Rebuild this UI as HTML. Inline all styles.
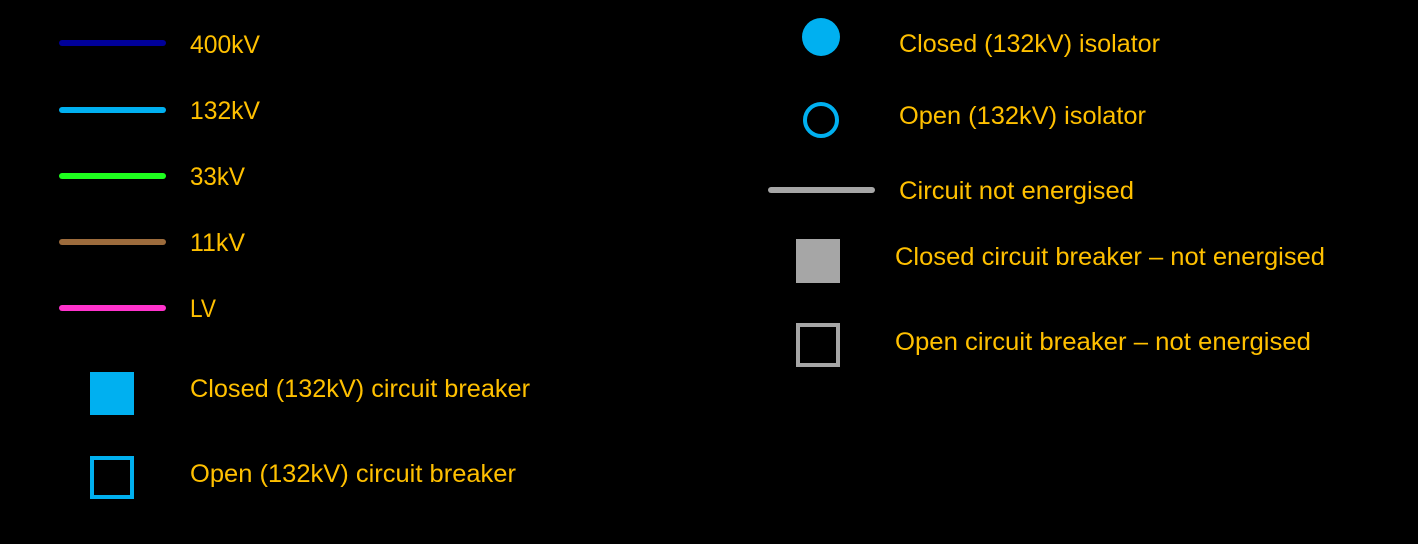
<!DOCTYPE html>
<html><head><style>html,body{margin:0;background:#000;overflow:hidden}</style></head>
<body>
<svg width="1418" height="544" xmlns="http://www.w3.org/2000/svg" style="display:block">
<rect width="1418" height="544" fill="#000"/>
<g stroke-linecap="round" stroke-width="6">
<line x1="62" y1="43" x2="163" y2="43" stroke="#000099"/>
<line x1="62" y1="110" x2="163" y2="110" stroke="#00B0F0"/>
<line x1="62" y1="176" x2="163" y2="176" stroke="#1EFF1E"/>
<line x1="62" y1="242" x2="163" y2="242" stroke="#9C6B3C"/>
<line x1="62" y1="308" x2="163" y2="308" stroke="#FF33CC"/>
<line x1="771" y1="190" x2="872" y2="190" stroke="#A6A6A6"/>
</g>
<rect x="90" y="372" width="44" height="43" fill="#00B0F0"/>
<rect x="92" y="458" width="40" height="39" fill="none" stroke="#00B0F0" stroke-width="4"/>
<rect x="796" y="239" width="44" height="44" fill="#A6A6A6"/>
<rect x="798" y="325" width="40" height="40" fill="none" stroke="#A6A6A6" stroke-width="4"/>
<circle cx="821" cy="37" r="19" fill="#00B0F0"/>
<circle cx="821" cy="120" r="16" fill="none" stroke="#00B0F0" stroke-width="4"/>
<g fill="#FFC000" font-family="Liberation Sans, sans-serif" font-size="25">
<text x="190" y="53" textLength="70" lengthAdjust="spacingAndGlyphs">400kV</text>
<text x="190" y="119" textLength="70" lengthAdjust="spacingAndGlyphs">132kV</text>
<text x="190" y="185" textLength="55" lengthAdjust="spacingAndGlyphs">33kV</text>
<text x="190" y="251" textLength="55" lengthAdjust="spacingAndGlyphs">11kV</text>
<text x="190" y="317" textLength="26" lengthAdjust="spacingAndGlyphs">LV</text>
<text x="190" y="397" textLength="340" lengthAdjust="spacingAndGlyphs">Closed (132kV) circuit breaker</text>
<text x="190" y="482" textLength="326" lengthAdjust="spacingAndGlyphs">Open (132kV) circuit breaker</text>
<text x="899" y="52" textLength="261" lengthAdjust="spacingAndGlyphs">Closed (132kV) isolator</text>
<text x="899" y="124" textLength="247" lengthAdjust="spacingAndGlyphs">Open (132kV) isolator</text>
<text x="899" y="199" textLength="235" lengthAdjust="spacingAndGlyphs">Circuit not energised</text>
<text x="895" y="265" textLength="430" lengthAdjust="spacingAndGlyphs">Closed circuit breaker – not energised</text>
<text x="895" y="350" textLength="416" lengthAdjust="spacingAndGlyphs">Open circuit breaker – not energised</text>
</g>
</svg>
</body></html>
